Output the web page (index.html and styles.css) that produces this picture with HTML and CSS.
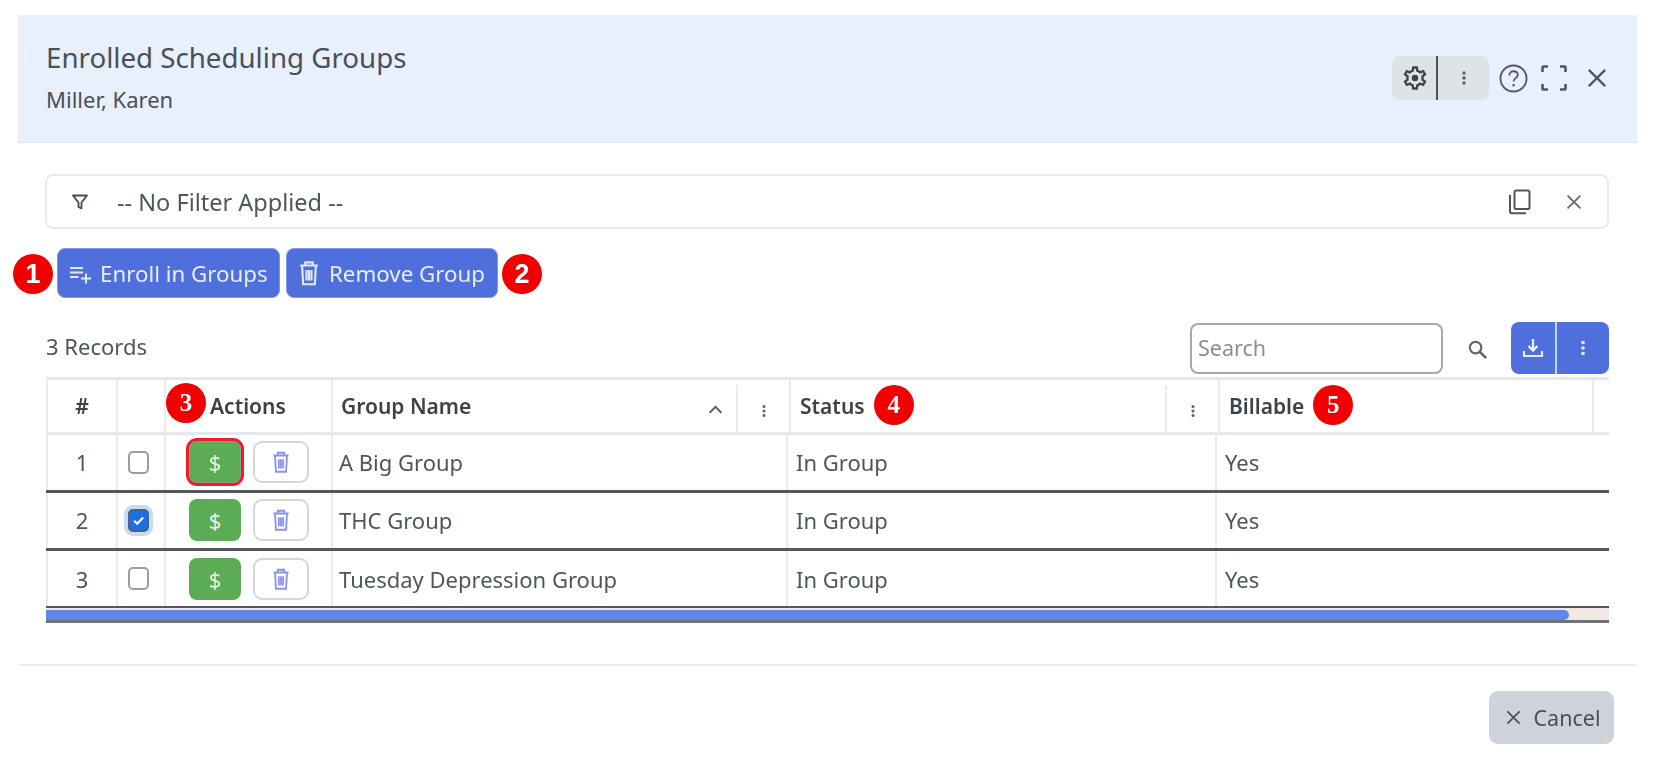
FILE: index.html
```html
<!DOCTYPE html>
<html lang="en">
<head>
<meta charset="utf-8">
<title>Enrolled Scheduling Groups</title>
<link rel="stylesheet" href="styles.css">
</head>
<body>
<svg class="sprite" aria-hidden="true">
  <symbol id="i-dots" viewBox="0 0 24 24"><circle cx="12" cy="6" r="2"/><circle cx="12" cy="12" r="2"/><circle cx="12" cy="18" r="2"/></symbol>
  <symbol id="i-close" viewBox="0 0 24 24"><path d="M5 5l14 14M19 5L5 19" fill="none" stroke="currentColor" stroke-width="2"/></symbol>
  <symbol id="i-trash" viewBox="0 0 24 24"><path d="M5 6h14M9 6V3.500h6V6M6.500 6l.8 15h9.400l.8-15M10 9.500v8.500M14 9.500v8.500M12 9.500v8.500" fill="none" stroke="currentColor" stroke-width="1.700"/></symbol>
</svg>
<div class="dialog">
  <header class="head">
    <div class="head-text">
      <h1 class="title">Enrolled Scheduling Groups</h1>
      <p class="subtitle">Miller, Karen</p>
    </div>
    <div class="head-tools">
      <div class="split">
        <span class="split-a">
          <svg class="ic-gear" viewBox="0 0 24 24"><path d="M19.43 12.98c.04-.32.07-.64.07-.98 0-.34-.03-.66-.07-.98l2.11-1.65c.19-.15.24-.42.12-.64l-2-3.46c-.09-.16-.26-.25-.44-.25-.06 0-.12.01-.17.03l-2.49 1c-.52-.4-1.08-.73-1.69-.98l-.38-2.65C14.46 2.18 14.25 2 14 2h-4c-.25 0-.46.18-.49.42l-.38 2.65c-.61.25-1.17.59-1.69.98l-2.49-1c-.06-.02-.12-.03-.18-.03-.17 0-.34.09-.43.25l-2 3.46c-.13.22-.07.49.12.64l2.11 1.65c-.04.32-.07.65-.07.98 0 .33.03.66.07.98l-2.11 1.65c-.19.15-.24.42-.12.64l2 3.46c.09.16.26.25.44.25.06 0 .12-.01.17-.03l2.49-1c.52.4 1.08.73 1.69.98l.38 2.65c.03.24.24.42.49.42h4c.25 0 .46-.18.49-.42l.38-2.65c.61-.25 1.17-.59 1.69-.98l2.49 1c.06.02.12.03.18.03.17 0 .34-.09.43-.25l2-3.46c.12-.22.07-.49-.12-.64l-2.11-1.65zm-1.98-1.71c.04.31.05.52.05.73 0 .21-.02.43-.05.73l-.14 1.13.89.7 1.08.84-.7 1.21-1.27-.51-1.04-.42-.9.68c-.43.32-.84.56-1.25.73l-1.06.43-.16 1.13-.2 1.35h-1.4l-.19-1.35-.16-1.13-1.06-.43c-.43-.18-.83-.41-1.23-.71l-.91-.7-1.06.43-1.27.51-.7-1.21 1.08-.84.89-.7-.14-1.13c-.03-.31-.05-.54-.05-.74s.02-.43.05-.73l.14-1.13-.89-.7-1.08-.84.7-1.21 1.27.51 1.04.42.9-.68c.43-.32.84-.56 1.25-.73l1.06-.43.16-1.13.2-1.35h1.39l.19 1.35.16 1.13 1.06.43c.43.18.83.41 1.23.71l.91.7 1.06-.43 1.27-.51.7 1.21-1.07.85-.89.7.14 1.13z"/><circle cx="12" cy="12" r="2.800"/></svg>
        </span>
        <span class="split-b"><svg class="ic-dots"><use href="#i-dots"/></svg></span>
      </div>
      <svg class="ic-help" viewBox="0 0 28 28"><circle cx="14" cy="14" r="12.600" fill="none" stroke="currentColor" stroke-width="1.800"/><path d="M10 11c0-2.400 1.800-4 4.100-4s4 1.500 4 3.600c0 3-4 3.100-4 6.200" fill="none" stroke="currentColor" stroke-width="1.800"/><circle cx="14.100" cy="20.400" r="1.200" fill="currentColor"/></svg>
      <svg class="ic-full" viewBox="0 0 26 26"><path d="M1.500 7V2.500q0-1 1-1H7M19 1.500h4.500q1 0 1 1V7M24.500 19v4.500q0 1-1 1H19M7 24.500H2.500q-1 0-1-1V19" fill="none" stroke="currentColor" stroke-width="2.600"/></svg>
      <svg class="ic-x"><use href="#i-close"/></svg>
    </div>
  </header>

  <main class="content">
    <div class="filter">
      <svg class="ic-filter" viewBox="0 0 18 18"><path d="M2 2.500h14L10.500 9.500v6l-3-1.500V9.500z" fill="none" stroke="currentColor" stroke-width="1.800" stroke-linejoin="round"/></svg>
      <span class="filter-text">-- No Filter Applied --</span>
      <svg class="ic-copy" viewBox="0 0 24 26"><rect x="6.500" y="1.500" width="15" height="18.500" rx="1.500" fill="none" stroke="currentColor" stroke-width="2"/><path d="M2 6v16.500c0 1 .7 1.800 1.700 1.800H18" fill="none" stroke="currentColor" stroke-width="2"/></svg>
      <svg class="ic-x-small"><use href="#i-close"/></svg>
    </div>

    <div class="actions">
      <span class="badge badge-1">1</span>
      <button class="btn btn-enroll"><svg class="ic-btn" viewBox="0 0 24 24"><path d="M2 6h13v2H2zM2 10.500h13v2H2zM2 15h8.500v2H2zM17 12.500h2v4h4v2h-4v4h-2v-4h-4v-2h4z" fill="currentColor"/></svg>Enroll in Groups</button>
      <button class="btn btn-remove"><svg class="ic-btn ic-btn-trash"><use href="#i-trash"/></svg>Remove Group</button>
      <span class="badge badge-2">2</span>
    </div>

    <div class="tools">
      <span class="records">3 Records</span>
      <input class="search" type="text" placeholder="Search">
      <svg class="ic-search" viewBox="0 0 24 24"><circle cx="10" cy="10" r="6" fill="none" stroke="currentColor" stroke-width="2.200"/><path d="M14.500 14.500L21 21" stroke="currentColor" stroke-width="2.600"/></svg>
      <div class="dl-group">
        <span class="dl-a"><svg class="ic-dl" viewBox="0 0 24 24"><path d="M12 3v11M7.500 10l4.500 4.500 4.500-4.500" fill="none" stroke="currentColor" stroke-width="2.400"/><path d="M3 15v5h18v-5" fill="none" stroke="currentColor" stroke-width="2.200"/></svg></span>
        <span class="dl-b"><svg class="ic-dots-w"><use href="#i-dots"/></svg></span>
      </div>
    </div>

    <div class="table">
      <div class="thead">
        <div class="th th-c">#</div>
        <div class="th"></div>
        <div class="th th-actions"><span class="badge">3</span><span>Actions</span></div>
        <div class="th th-name th-group"><span>Group Name</span>
          <svg class="ic-sort" viewBox="0 0 14 8"><path d="M1.500 7L7 1.500 12.500 7" fill="none" stroke="currentColor" stroke-width="1.800"/></svg>
          <span class="th-menu"><svg class="ic-menu"><use href="#i-dots"/></svg></span>
        </div>
        <div class="th th-name"><span>Status</span><span class="badge">4</span>
          <span class="th-menu"><svg class="ic-menu"><use href="#i-dots"/></svg></span>
        </div>
        <div class="th th-bill"><span>Billable</span><span class="badge">5</span></div>
      </div>

      <div class="row">
        <div class="td td-c">1</div>
        <div class="td td-c"><span class="check"></span></div>
        <div class="td td-actions"><span class="pay pay-focus">$</span><span class="del"><svg class="ic-del"><use href="#i-trash"/></svg></span></div>
        <div class="td td-group">A Big Group</div>
        <div class="td">In Group</div>
        <div class="td td-end">Yes</div>
      </div>
      <div class="row">
        <div class="td td-c">2</div>
        <div class="td td-c"><span class="check check-on"><svg class="ic-tick" viewBox="0 0 12 12"><path d="M2.500 6.200L5 8.600l4.700-5" fill="none" stroke="#fff" stroke-width="1.800"/></svg></span></div>
        <div class="td td-actions"><span class="pay">$</span><span class="del"><svg class="ic-del"><use href="#i-trash"/></svg></span></div>
        <div class="td td-group">THC Group</div>
        <div class="td">In Group</div>
        <div class="td td-end">Yes</div>
      </div>
      <div class="row">
        <div class="td td-c">3</div>
        <div class="td td-c"><span class="check"></span></div>
        <div class="td td-actions"><span class="pay">$</span><span class="del"><svg class="ic-del"><use href="#i-trash"/></svg></span></div>
        <div class="td td-group">Tuesday Depression Group</div>
        <div class="td">In Group</div>
        <div class="td td-end">Yes</div>
      </div>
      <div class="scroll"><div class="thumb"></div></div>
    </div>
  </main>

  <footer class="foot">
    <button class="cancel"><svg class="ic-cancel"><use href="#i-close"/></svg>Cancel</button>
  </footer>
</div>
</body>
</html>
```
FILE: styles.css
```css
* { box-sizing: border-box; }
html, body { margin: 0; padding: 0; background: #fff; }
body { width: 1653px; height: 758px; overflow: hidden; font-family: "Noto Sans", "Open Sans", sans-serif; color: #454b52; }
.sprite { display: none; }
.dialog { filter: blur(0.7px); }
svg { display: block; flex: none; fill: currentColor; }

.head { margin: 15px 16px 0 18px; height: 128px; background: #e8effd; border-bottom: 1px solid #e3e7ee; display: flex; justify-content: space-between; padding: 0 26px 0 28px; }
.title { margin: 26px 0 0; font-size: 27.700px; line-height: 33px; font-weight: 400; color: #4a5057; }
.subtitle { margin: 11px 0 0; font-size: 22px; line-height: 28px; color: #4a5057; }
.head-tools { display: flex; align-items: center; align-self: flex-start; margin-top: 38px; height: 50px; }
.split { display: flex; width: 97px; height: 44px; border-radius: 8px; background: #dfe3e8; }
.split-a { width: 46px; display: flex; align-items: center; justify-content: center; border-right: 2px solid #4a5057; padding-left: 1px; }
.split-b { flex: 1; display: flex; align-items: center; justify-content: center; }
.ic-gear { width: 28px; height: 28px; color: #3f444a; }
.ic-dots { width: 20px; height: 20px; color: #555b62; }
.ic-help { width: 29px; height: 29px; margin-left: 10px; color: #555b62; }
.ic-full { width: 26px; height: 26px; margin-left: 13px; color: #50565d; }
.ic-x { width: 28px; height: 28px; margin-left: 16px; color: #50565d; }

.content { padding: 31px 45px 0 46px; }
.filter { height: 55px; border: 2px solid #e9ebee; border-radius: 8px; display: flex; align-items: center; padding: 0 22px 0 24px; width: 1564px; margin-left: -1px; }
.ic-filter { width: 18px; height: 18px; color: #44494f; }
.filter-text { margin-left: 28px; font-size: 23.500px; color: #4f555c; flex: 1; }
.ic-copy { width: 24px; height: 26px; color: #50565d; margin-right: 31px; }
.ic-x-small { width: 22px; height: 22px; color: #666b72; }

.actions { position: relative; display: flex; gap: 6px; margin: 19px 0 0 11px; }
.btn { height: 50px; border: 1px solid #7e96e6; border-radius: 8px; background: #4e6fdc; color: #e8edfb; font: 22.300px "Noto Sans", sans-serif; display: flex; align-items: center; padding: 0 0 0 10px; }
.btn-enroll { width: 223px; }
.btn-remove { width: 212px; }
.ic-btn { width: 24px; height: 24px; margin-right: 8px; color: #e3e9fa; }
.ic-btn-trash { width: 30px; height: 30px; margin: 0 5px 0 -3px; }
.badge { display: inline-flex; align-items: center; justify-content: center; flex: none; width: 40px; height: 40px; border-radius: 50%; background: #f00000; color: #fff; font: 700 25px "Liberation Serif", serif; }
.badge-1 { position: absolute; left: -44px; top: 6px; font: 700 27px "Liberation Sans", sans-serif; }
.badge-2 { position: absolute; left: 445px; top: 6px; font: 700 27px "Liberation Sans", sans-serif; }

.tools { display: flex; align-items: center; height: 52px; margin-top: 24px; }
.records { font-size: 22px; color: #4f555c; flex: 1; margin-bottom: 4px; }
.search { width: 253px; height: 51px; border: 2px solid #a5a8ac; border-radius: 8px; padding: 0 6px 2px; font: 21.500px "Noto Sans", sans-serif; outline: none; color: #444; }
.search::placeholder { color: #8a8e93; opacity: 1; }
.ic-search { width: 23px; height: 23px; margin: 3px 0 0 23px; color: #5f6369; }
.dl-group { margin-left: 22px; margin-right: -1px; width: 98px; height: 52px; border-radius: 8px; background: #4e6fdc; display: flex; color: #e8edfb; }
.dl-a { width: 46px; border-right: 2px solid #c6d2f4; display: flex; align-items: center; justify-content: center; }
.dl-b { flex: 1; display: flex; align-items: center; justify-content: center; }
.ic-dl { width: 24px; height: 24px; }
.ic-dots-w { width: 22px; height: 22px; }

.table { margin-top: 3px; width: 1563px; }
.thead { display: grid; grid-template-columns: 72px 48px 167px 458px 429px 374px 15px; height: 57.500px; border-top: 3px solid #e6e8ec; border-bottom: 3px solid #e6e8ec; }
.th { font-size: 21px; font-weight: 600; color: #3d4249; display: flex; align-items: center; border-right: 2px solid #e9ebee; padding-left: 9px; }
.thead .th:first-child { border-left: 2px solid #e9ebee; }
.th-c { justify-content: center; padding: 0; }
.th-actions { padding: 0; gap: 4px; }
.th-actions .badge { margin-top: -6px; }
.th-name { position: relative; }
.th-group { padding-left: 8px; }
.th-name .badge, .th-bill .badge { margin-left: 9px; margin-top: -2px; }
.ic-sort { position: absolute; right: 66px; top: 25px; width: 15px; height: 9px; color: #5a5f66; }
.th-menu { position: absolute; right: 0; top: 5px; bottom: 0; width: 53px; border-left: 2px solid #e9ebee; display: flex; align-items: center; justify-content: center; }
.ic-menu { width: 18px; height: 18px; color: #5b6168; margin-top: 6px; }

.row { display: grid; grid-template-columns: 72px 48px 167px 455px 429px 392px; height: 58.300px; border-bottom: 3px solid #54585d; }
.td { font-size: 22px; color: #4f555c; display: flex; align-items: center; padding-left: 8px; border-right: 2px solid #e9ebee; }
.td:first-child { border-left: 2px solid #e9ebee; }
.td-c { justify-content: center; padding: 0; }
.td-group { padding-left: 6px; }
.td-end { border-right: 0; }
.td-actions { padding: 0 0 0 23px; gap: 12px; }
.check { width: 21px; height: 23px; margin-right: 5px; border: 2px solid #9a9ea3; border-radius: 5px; background: #fff; display: block; }
.check-on { background: #1a6fe6; border-color: #55606e; box-shadow: 0 0 0 4px #c5dbfb; display: flex; align-items: center; justify-content: center; }
.ic-tick { width: 15px; height: 15px; }
.pay { width: 52px; height: 42px; border-radius: 8px; background: #5cab55; color: #e6f4e3; font-size: 22px; display: flex; align-items: center; justify-content: center; }
.pay-focus { outline: 3px solid #ee1c2e; outline-offset: 0; box-shadow: inset 0 0 0 1px #8a9a88; }
.del { width: 56px; height: 42px; border: 2px solid #d3d6da; border-radius: 9px; background: #fff; display: flex; align-items: center; justify-content: center; }
.ic-del { width: 26px; height: 26px; color: #8b92ea; }

.scroll { height: 15px; padding-top: 2px; border-bottom: 3px solid #6f7276; background: #f1e7e3; margin-top: -1px; }
.thumb { width: 1523px; height: 10px; border-radius: 0 6px 6px 0; background: #6286e8; }

.foot { margin: 40.600px 16px 0 18px; border-top: 2px solid #eceef2; height: 80px; display: flex; justify-content: flex-end; align-items: flex-start; padding: 25px 23px 0 0; }
.cancel { width: 125px; height: 53px; border: 0; border-radius: 9px; background: #cfd3d9; color: #4a4f56; font: 21.500px "Noto Sans", sans-serif; display: flex; align-items: center; justify-content: center; gap: 10px; }
.ic-cancel { width: 21px; height: 21px; }
```
